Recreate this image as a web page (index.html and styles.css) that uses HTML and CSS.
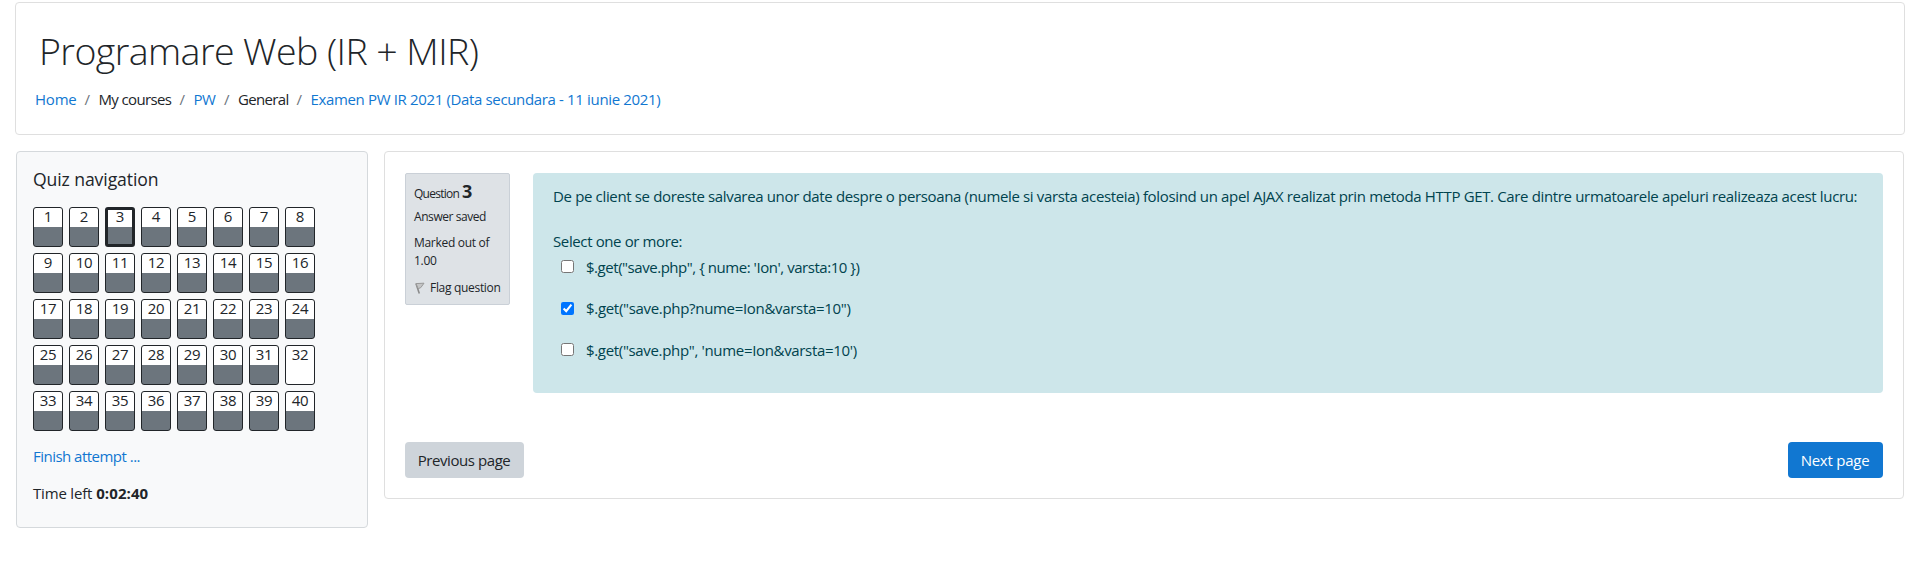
FILE: index.html
```html
<!DOCTYPE html>
<html lang="en">
<head>
<meta charset="utf-8">
<title>Programare Web (IR + MIR)</title>
<link rel="stylesheet" href="styles.css">
</head>
<body>
<header class="card page-header">
  <h1>Programare Web (IR + MIR)</h1>
  <nav class="breadcrumb">
    <a class="bc-home" href="#">Home</a><i>/</i><span class="bc-courses">My courses</span><i>/</i><a class="bc-pw" href="#">PW</a><i>/</i><span class="bc-general">General</span><i>/</i><a class="bc-exam" href="#">Examen PW IR 2021 (Data secundara - 11 iunie 2021)</a>
  </nav>
</header>
<div class="columns">
  <aside class="card quiz-nav">
    <h2>Quiz navigation</h2>
    <div class="grid">
      <a class="qn">1</a><a class="qn">2</a><a class="qn current">3</a><a class="qn">4</a><a class="qn">5</a><a class="qn">6</a><a class="qn">7</a><a class="qn">8</a>
      <a class="qn">9</a><a class="qn">10</a><a class="qn">11</a><a class="qn">12</a><a class="qn">13</a><a class="qn">14</a><a class="qn">15</a><a class="qn">16</a>
      <a class="qn">17</a><a class="qn">18</a><a class="qn">19</a><a class="qn">20</a><a class="qn">21</a><a class="qn">22</a><a class="qn">23</a><a class="qn">24</a>
      <a class="qn">25</a><a class="qn">26</a><a class="qn">27</a><a class="qn">28</a><a class="qn">29</a><a class="qn">30</a><a class="qn">31</a><a class="qn empty">32</a>
      <a class="qn">33</a><a class="qn">34</a><a class="qn">35</a><a class="qn">36</a><a class="qn">37</a><a class="qn">38</a><a class="qn">39</a><a class="qn">40</a>
    </div>
    <a class="finish" href="#">Finish attempt ...</a>
    <div class="timer"><span>Time left</span> <b>0:02:40</b></div>
  </aside>
  <main class="card attempt">
    <div class="question">
      <div class="info">
        <div class="qno"><span>Question</span><b>3</b></div>
        <div class="state">Answer saved</div>
        <div class="grade">Marked out of<br>1.00</div>
        <div class="flag">
          <svg width="10" height="12" viewBox="0 0 10 12" fill="none"><path d="M1 1.5 4.3 11.5" stroke="#8a8a8a" stroke-width="1.6"/><path d="M1 1.6 9 1.2 5.8 5.6 3.2 6.7Z" fill="#c4c5c6" stroke="#999" stroke-width="1"/></svg>
          <span>Flag question</span>
        </div>
      </div>
      <div class="content">
        <p class="qtext">De pe client se doreste salvarea unor date despre o persoana (numele si varsta acesteia) folosind un apel AJAX realizat prin metoda HTTP GET. Care dintre urmatoarele apeluri realizeaza acest lucru:</p>
        <p class="prompt">Select one or more:</p>
        <div class="answers">
          <label><input type="checkbox"><span class="a1">$.get("save.php", { nume: 'Ion', varsta:10 })</span></label>
          <label><input type="checkbox" checked><span class="a2">$.get("save.php?nume=Ion&amp;varsta=10")</span></label>
          <label><input type="checkbox"><span class="a3">$.get("save.php", 'nume=Ion&amp;varsta=10')</span></label>
        </div>
      </div>
    </div>
    <div class="buttons">
      <button class="btn prev">Previous page</button>
      <button class="btn next">Next page</button>
    </div>
  </main>
</div>
</body>
</html>
```
FILE: styles.css
```css
* { box-sizing: border-box; }
body {
  margin: 0;
  padding: 2px 15px 0;
  height: 584px;
  overflow: hidden;
  background: #fff;
  color: #212529;
  font: 400 15px/22px "Open Sans", "Noto Sans", sans-serif;
  white-space: nowrap;
}
a { color: #1177d1; text-decoration: none; }
h1, h2, p { margin: 0; }
.card { border: 1px solid #dfdfdf; border-radius: 4px; }

.page-header { height: 133px; padding: 25px 19px 0; }
h1 { font-size: 37.5px; line-height: 45px; font-weight: 300; letter-spacing: -0.57px; padding-left: 4px; }
.breadcrumb { display: flex; margin-top: 15px; }
.breadcrumb i { width: 22.5px; text-align: center; font-style: normal; color: #6c757d; }
.bc-home { width: 41px; letter-spacing: -0.2px; }
.bc-courses { width: 72.5px; letter-spacing: -0.63px; }
.bc-pw { width: 22px; letter-spacing: -0.4px; }
.bc-general { width: 50px; letter-spacing: -0.65px; }
.bc-exam { letter-spacing: -0.35px; }

.columns { display: flex; align-items: flex-start; justify-content: space-between; padding: 16px 1px 0; }
.quiz-nav { width: 352px; height: 377px; padding: 17px 16px 0; background: #f8f9fa; border-color: #d5d9dc; }
h2 { font-size: 17.6px; line-height: 21px; font-weight: 400; letter-spacing: -0.1px; }
.grid { display: grid; grid-template-columns: repeat(8, 30px); gap: 6px; margin-top: 17px; }
.qn {
  height: 40px;
  border: 1px solid #212529;
  border-radius: 3px;
  background: linear-gradient(#fff 19px, #6c757d 19px);
  color: #212529;
  line-height: 16px;
  text-align: center;
  letter-spacing: -0.3px;
}
.qn.empty { background: #fff; }
.qn.current { border-width: 3px; line-height: 12px; background: linear-gradient(#fff 17px, #6c757d 17px); }
.finish { display: block; margin-top: 14px; letter-spacing: -0.52px; }
.timer { margin-top: 15px; }
.timer span { letter-spacing: -0.18px; }
.timer b { letter-spacing: 0.1px; }

.attempt { width: 1520px; height: 348px; padding: 21px 20px 0; }
.question { display: flex; justify-content: space-between; }
.info {
  width: 105px;
  height: 132px;
  padding: 7px 8px 0;
  background: #dee2e6;
  border: 1px solid #cad0d7;
  border-radius: 2px;
  font-size: 12px;
  line-height: 18px;
}
.qno { display: flex; align-items: baseline; gap: 3px; height: 20px; }
.qno span { letter-spacing: -0.75px; }
.qno b { font-size: 18px; line-height: 20px; }
.state { margin-top: 7px; letter-spacing: -0.43px; }
.grade { margin-top: 8px; letter-spacing: -0.3px; }
.flag { display: flex; align-items: center; gap: 5px; margin-top: 9px; letter-spacing: -0.31px; }
.flag svg { flex: none; margin-left: 1px; }

.content { width: 1350px; height: 220px; padding: 12px 20px 0; border-radius: 4px; background: #cde6ea; color: #00434e; }
.qtext { letter-spacing: -0.348px; }
.prompt { margin-top: 23px; letter-spacing: -0.38px; }
.answers { display: grid; grid-template-rows: 42px 41px 22px; margin-top: 4px; padding-left: 8px; }
.answers label { display: flex; align-items: flex-start; }
.answers label:nth-child(2) span { margin-top: -1px; }
.answers input { width: 13px; height: 13px; margin: 4px 12px 0 0; accent-color: #0075ff; }
.a1 { letter-spacing: -0.46px; }
.a2 { letter-spacing: -0.31px; }
.a3 { letter-spacing: -0.33px; }

.buttons { display: flex; justify-content: space-between; margin-top: 49px; }
.btn { height: 36px; padding: 0 1px 0 0; border: 0; border-radius: 4px; font: inherit; }
.prev { width: 119px; background: #ced4da; color: #212529; letter-spacing: -0.42px; }
.next { width: 95px; background: #1177d1; color: #fff; letter-spacing: -0.24px; }
```
